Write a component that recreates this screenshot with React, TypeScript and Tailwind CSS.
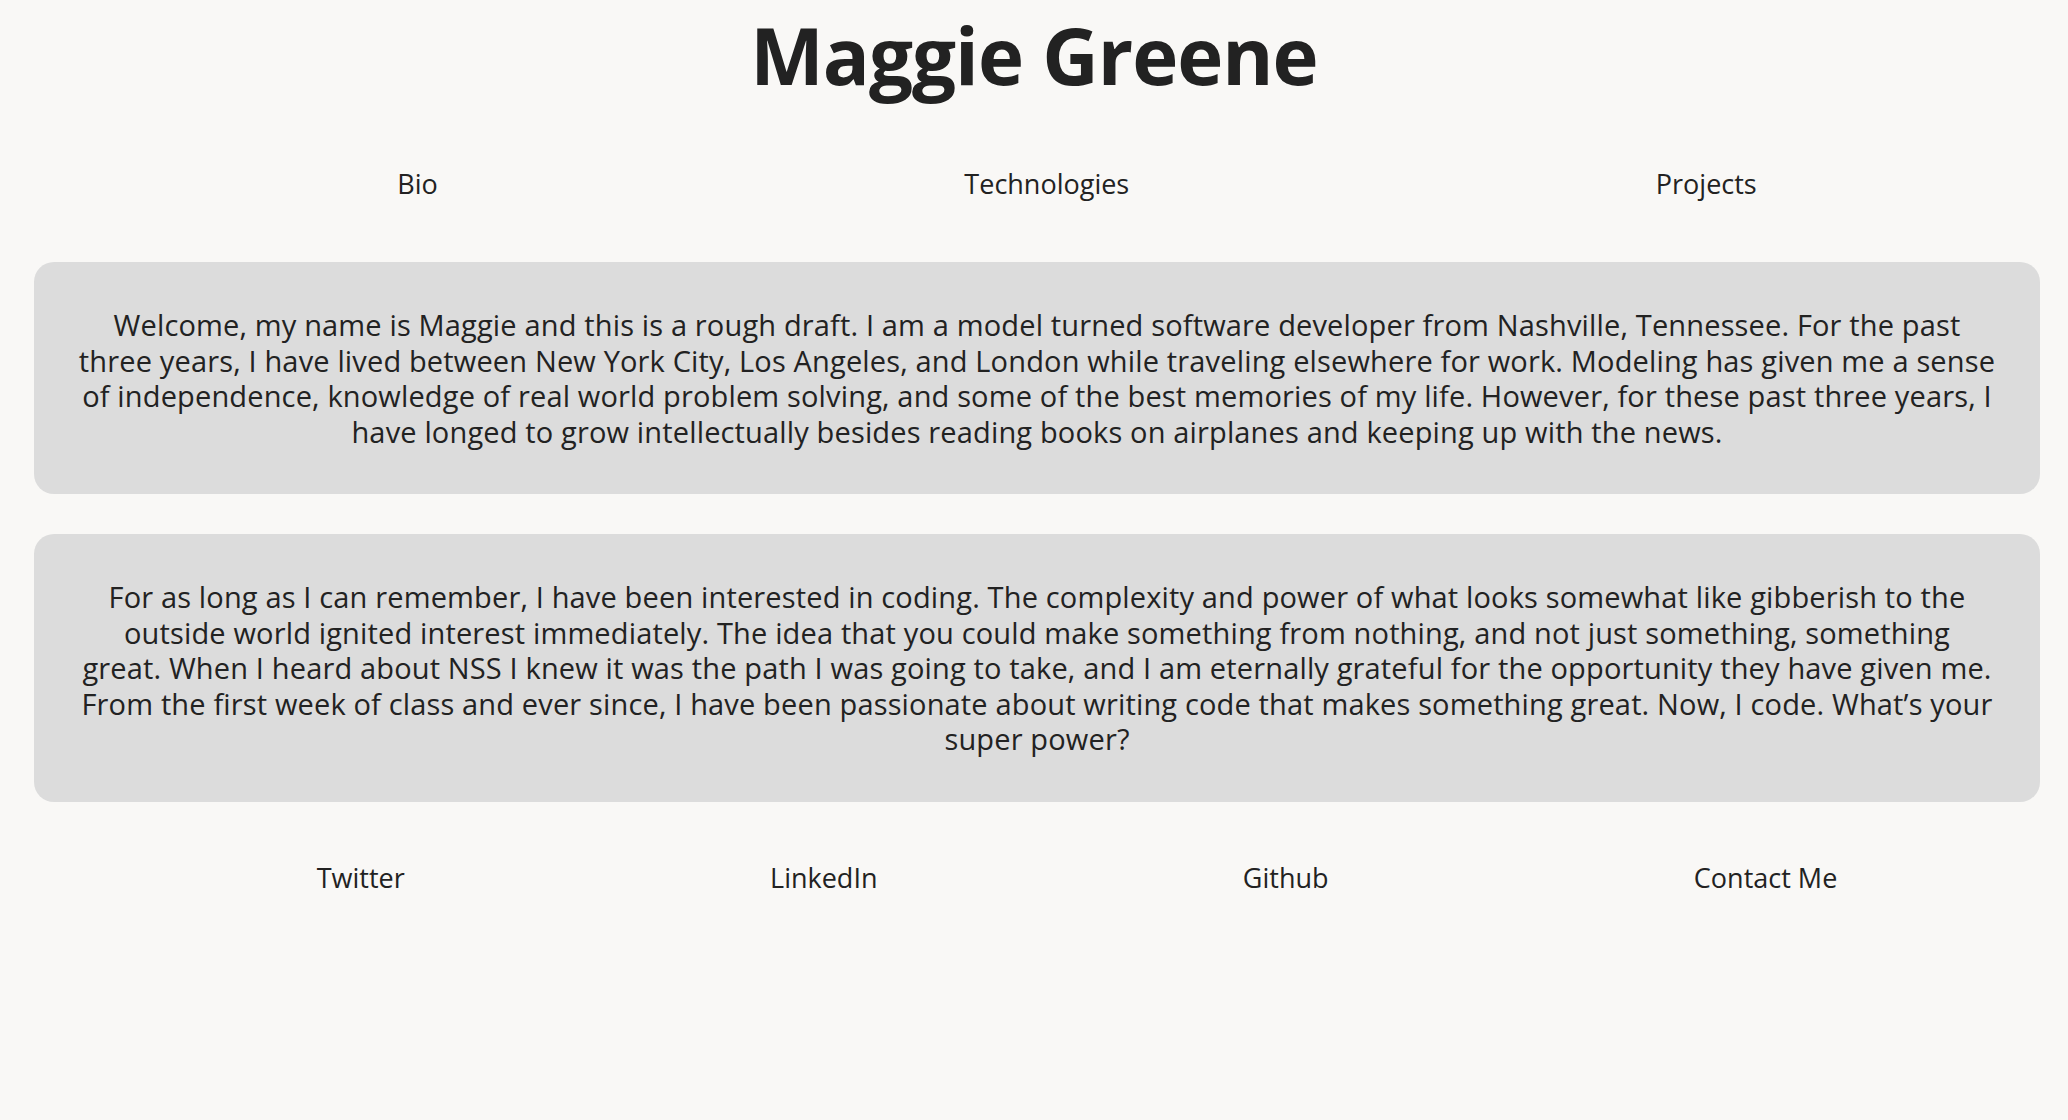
const bio = [
  "Welcome, my name is Maggie and this is a rough draft. I am a model turned software developer from Nashville, Tennessee. For the past",
  "three years, I have lived between New York City, Los Angeles, and London while traveling elsewhere for work. Modeling has given me a sense",
  "of independence, knowledge of real world problem solving, and some of the best memories of my life. However, for these past three years, I",
  "have longed to grow intellectually besides reading books on airplanes and keeping up with the news.",
];

const story = [
  "For as long as I can remember, I have been interested in coding. The complexity and power of what looks somewhat like gibberish to the",
  "outside world ignited interest immediately. The idea that you could make something from nothing, and not just something, something",
  "great. When I heard about NSS I knew it was the path I was going to take, and I am eternally grateful for the opportunity they have given me.",
  "From the first week of class and ever since, I have been passionate about writing code that makes something great. Now, I code. What\u2019s your",
  "super power?",
];

function Panel({ lines }: { lines: string[] }) {
  return (
    <section className="ml-[34px] mr-[28px] rounded-[20px] bg-[#dcdcdc] px-[24px] py-[45px]">
      <p className="text-center text-[29px] leading-[35.5px] tracking-[0.15px]">
        {lines.map((line, i) => (
          <span key={i}>
            {line}
            {i < lines.length - 1 && <br />}
          </span>
        ))}
      </p>
    </section>
  );
}

export default function App() {
  return (
    <div className="min-h-screen bg-[#f9f8f6] pb-10 font-['Open_Sans',sans-serif] text-[#222]">
      <h1 className="pt-[16px] text-center text-[78px] font-bold leading-none tracking-[-1px]">Maggie Greene</h1>

      <nav className="mt-[72px] flex justify-around pl-[134px] pr-[48px] text-[27px] leading-[36px]">
        <a>Bio</a>
        <a>Technologies</a>
        <a>Projects</a>
      </nav>

      <main className="mt-[60px] flex flex-col gap-[40px]">
        <Panel lines={bio} />
        <Panel lines={story} />
      </main>

      <footer className="mt-[58px] flex justify-around pl-[134px] pr-[48px] text-[27px] leading-[36px]">
        <a>Twitter</a>
        <a>LinkedIn</a>
        <a>Github</a>
        <a>Contact Me</a>
      </footer>
    </div>
  );
}
